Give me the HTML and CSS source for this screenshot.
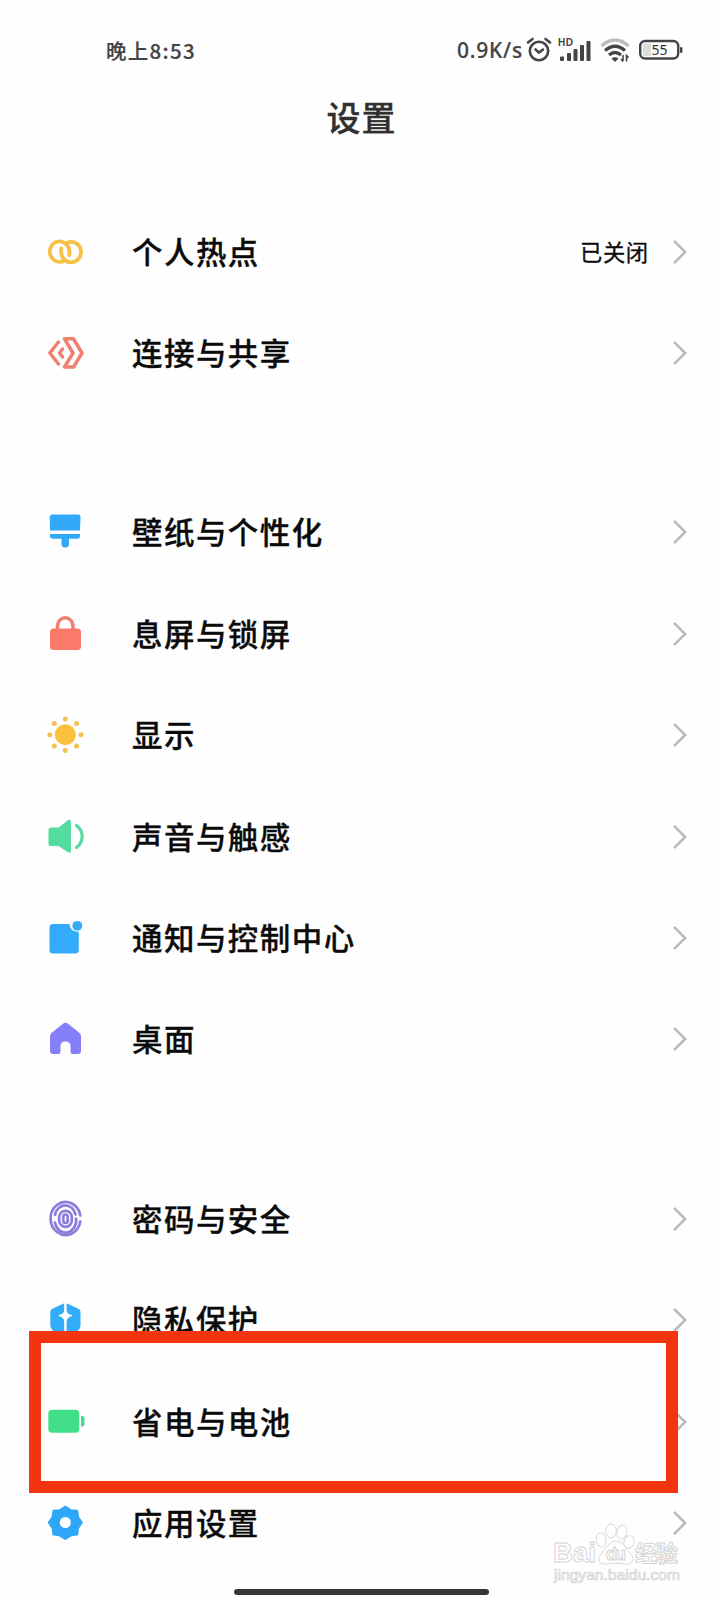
FILE: index.html
```html
<!DOCTYPE html>
<html lang="zh-CN">
<head>
<meta charset="utf-8">
<title>设置</title>
<link rel="stylesheet" href="styles.css">
</head>
<body>
<svg class="defs" width="0" height="0"><symbol id="chevron" viewBox="0 0 16 26"><path d="M2 1.800L13.200 13L2 24.200" fill="none" stroke="#b9b9b9" stroke-width="2.500"/></symbol></svg>
<div class="screen">
  <header class="status">
    <span class="time">晚上8:53</span>
    <div class="indicators">
      <span class="speed">0.9K/s</span>
      <svg class="alarm" width="26" height="26" viewBox="0 0 26 26" fill="none" stroke="#444" stroke-width="2.600" stroke-linecap="round"><circle cx="13" cy="14" r="9.200"/><path d="M9.500 12.500L13 15.500L17 12.500M2 5.500L6.500 2M24 5.500L19.500 2"/></svg>
      <svg class="signal" width="33" height="26" viewBox="0 0 33 26"><text class="hd" x="0" y="8.500" textLength="15">HD</text><g fill="#444"><rect x="2" y="19.500" width="4" height="4.500" rx="1"/><rect x="9" y="16" width="4" height="8" rx="1"/><rect x="15.500" y="12" width="4" height="12" rx="1"/><rect x="22" y="8" width="4" height="16" rx="1"/><rect x="28.500" y="4" width="4" height="20" rx="1"/></g></svg>
      <svg class="wifi" width="30" height="26" viewBox="0 0 30 26" fill="none" stroke-width="3.200"><path d="M1.500 9Q15-3 28.500 9" stroke="#bbb"/><path d="M5 13.500Q15 5 25 13.500M9 18Q15 13 21 18" stroke="#444"/><path d="M15 25L11.500 21.500Q15 18.800 18.500 21.500Z" fill="#444"/><path d="M23 18V24M21 22L23 24.500M26.500 24.500V18.500L28.500 20.500" stroke="#444" stroke-width="1.600"/></svg>
      <svg class="battery" width="44" height="22" viewBox="0 0 44 22"><rect x="1.200" y="2" width="38" height="17.500" rx="5" fill="none" stroke="#444" stroke-width="2.400"/><path d="M4 4.500H12V17H4Z" fill="#ddd"/><rect x="41" y="8" width="2.400" height="6" rx="1" fill="#444"/><text class="level" x="20.500" y="15.800" text-anchor="middle">55</text></svg>
    </div>
  </header>
  <h1 class="title">设置</h1>

  <main class="list">
    <section class="group">
      <div class="row"><svg class="icon" viewBox="0 0 40 40" fill="none" stroke="#f5c248" stroke-width="3.800" stroke-linecap="round"><path d="M24.400 23V19.500A9.800 10.200 0 1 0 19.500 28.500"/><path d="M16.200 16.500V20A9.900 10.200 0 1 0 22 10.800"/></svg><span class="label">个人热点</span><span class="value">已关闭</span><svg class="chevron"><use href="#chevron"/></svg></div>
      <div class="row"><svg class="icon" viewBox="0 0 40 40" fill="none" stroke="#f07f70" stroke-width="3.500" stroke-linecap="round" stroke-linejoin="round"><path d="M19.500 5.800H28.500L37 20L28.500 34H19.500L28 20ZM13.500 9L4.800 20L13.500 31M17.500 16L14.500 20L17.500 24"/></svg><span class="label">连接与共享</span><svg class="chevron"><use href="#chevron"/></svg></div>
    </section>
    <section class="group">
      <div class="row"><svg class="icon" viewBox="0 0 40 40" fill="#32a8fa"><path d="M7.500 2.500H33Q35.500 2.500 35.500 5L35 18.500H5L4.700 5Q4.700 2.500 7.500 2.500ZM5 22H35V24Q35 26.700 32.500 26.700H24V32Q24 35.500 20.300 35.500Q16.500 35.500 16.500 32V26.700H8Q5 26.700 5 24Z"/></svg><span class="label">壁纸与个性化</span><svg class="chevron"><use href="#chevron"/></svg></div>
      <div class="row"><svg class="icon" viewBox="0 0 40 40"><rect x="5" y="14.500" width="31" height="21.500" rx="3.500" fill="#fb7968"/><path d="M12.500 15.500V12A7.700 8.300 0 0 1 28 12V15.500" fill="none" stroke="#f47e6e" stroke-width="3.500"/></svg><span class="label">息屏与锁屏</span><svg class="chevron"><use href="#chevron"/></svg></div>
      <div class="row"><svg class="icon" viewBox="0 0 40 40" fill="#fcc13c"><circle cx="20.300" cy="19.700" r="10.500"/><g fill="#f3c252"><circle cx="20.300" cy="4" r="2.500"/><circle cx="20.300" cy="35.500" r="2.500"/><circle cx="4.800" cy="19.700" r="2.500"/><circle cx="36" cy="19.700" r="2.500"/><circle cx="9.300" cy="8.500" r="2.500"/><circle cx="31.500" cy="8.500" r="2.500"/><circle cx="9.300" cy="30.900" r="2.500"/><circle cx="31.500" cy="30.900" r="2.500"/></g></svg><span class="label">显示</span><svg class="chevron"><use href="#chevron"/></svg></div>
      <div class="row"><svg class="icon" viewBox="0 0 40 40" fill="#54dca0"><path d="M6 10.500H13.500L22.500 3.500Q26 1.500 26 5V33.500Q26 37 22.500 35L13.500 29H6Q3.500 29 3.500 26.500V13Q3.500 10.500 6 10.500Z"/><path d="M31.500 8.500C39 14 39 25 31.500 30.500" fill="none" stroke="#54dca0" stroke-width="3.200" stroke-linecap="round"/></svg><span class="label">声音与触感</span><svg class="chevron"><use href="#chevron"/></svg></div>
      <div class="row"><svg class="icon" viewBox="0 0 40 40" fill="#33aafa"><path d="M8 6H24.500Q24.800 13.500 33.800 14V32Q33.800 35.500 30.500 35.500H8Q4.500 35.500 4.500 32V9.500Q4.500 6 8 6Z"/><circle cx="32.300" cy="7.800" r="4.900"/></svg><span class="label">通知与控制中心</span><svg class="chevron"><use href="#chevron"/></svg></div>
      <div class="row"><svg class="icon" viewBox="0 0 40 40" fill="#8580f9"><path d="M18.300 4.500Q20.500 3 22.700 4.500L34 13.500Q36 15 36 17.500V32Q36 35 33 35H27.500Q25.500 35 25.500 33V27Q25.500 22.500 20.500 22.500Q15.500 22.500 15.500 27V33Q15.500 35 13.500 35H8Q5 35 5 32V17.500Q5 15 7 13.500Z"/></svg><span class="label">桌面</span><svg class="chevron"><use href="#chevron"/></svg></div>
    </section>
    <section class="group">
      <div class="row"><svg class="icon" viewBox="0 0 40 40" fill="none" stroke="#8b7edb" stroke-width="2.700" stroke-linecap="round"><path d="M35.300 16.500A15 16.500 0 1 0 35.300 22.500"/><path d="M10 16A10.500 12 0 0 1 30.500 15.500M31 19.500A10.500 12 0 0 1 10 23.500"/><rect x="14.200" y="11.800" width="12.600" height="16" rx="6.300"/><rect x="18.300" y="15.500" width="4.400" height="8.500" rx="2.200"/></svg><span class="label">密码与安全</span><svg class="chevron"><use href="#chevron"/></svg></div>
      <div class="row"><svg class="icon" viewBox="0 0 40 40"><path d="M7 9L18 3.700Q20.400 2.700 22.800 3.700L33.800 9Q35.500 10 35.500 12V25Q35.500 32 20.400 37Q5.300 32 5.300 25V12Q5.300 10 7 9Z" fill="#31adfa"/><path d="M20.400 2V34" stroke="#fff" stroke-width="2.400"/><path d="M20.400 9.500Q21.500 14.500 27 15.500Q21.500 17 20.400 22.500Q19.300 17 13.800 15.500Q19.300 14.500 20.400 9.500Z" fill="#fff" stroke="#fff"/></svg><span class="label">隐私保护</span><svg class="chevron"><use href="#chevron"/></svg></div>
      <div class="row marked"><svg class="icon" viewBox="0 0 40 40" fill="#42df88"><rect x="3.300" y="7.800" width="31" height="23" rx="3.800"/><path d="M36 14Q39.500 13.500 39.500 16.500V22Q39.500 25 36 24.500Z"/></svg><span class="label">省电与电池</span><svg class="chevron"><use href="#chevron"/></svg><div class="highlight"></div></div>
      <div class="row"><svg class="icon" viewBox="0 0 40 40"><path d="M20.300 3.500L26 7.300L32.200 7.800L33 14L36.800 19.500L33 25.200L32.200 31.500L26 32.300L20.300 36L14.600 32.300L8.400 31.500L7.600 25.200L3.800 19.500L7.600 14L8.400 7.800L14.600 7.300Z" fill="#2fa7f8" stroke="#2fa7f8" stroke-width="2" stroke-linejoin="round"/><circle cx="20.300" cy="19.500" r="5.500" fill="#fff"/></svg><span class="label">应用设置</span><svg class="chevron"><use href="#chevron"/></svg></div>
    </section>
  </main>
  <div class="homebar"></div>
  <svg class="watermark" width="136" height="66" viewBox="0 0 136 66">
    <g fill="#fff" stroke="#d8d8d8" stroke-width="1"><ellipse cx="49" cy="18" rx="5" ry="7" transform="rotate(-12 49 18)"/><ellipse cx="59" cy="9" rx="5.300" ry="7"/><ellipse cx="70" cy="10" rx="5" ry="7" transform="rotate(12 70 10)"/><ellipse cx="77" cy="20" rx="5" ry="6.500" transform="rotate(20 77 20)"/><path d="M64 19C57 19 54 27 49 32C44 38 48 43 54 42C61 41 67 41 73 42C80 43 84 37 78 31C73 26 71 19 64 19Z"/></g>
    <g class="mark"><text x="1" y="40" font-size="28" textLength="43" lengthAdjust="spacingAndGlyphs">Bai</text><text x="54" y="38" font-size="18" textLength="20">du</text><text x="83" y="39" font-size="22" textLength="43">经验</text><text x="2" y="58" font-size="14" class="url" textLength="126" lengthAdjust="spacingAndGlyphs">jingyan.baidu.com</text></g>
  </svg>
</div>
</body>
</html>
```
FILE: styles.css
```css
* { box-sizing: border-box; }
body { margin: 0; background: #fefefe; font-family: "Noto Sans CJK SC", sans-serif; color: #0b0b0b; }
.defs { position: absolute; }
.screen { position: relative; width: 720px; height: 1600px; overflow: hidden; display: flex; flex-direction: column; }
.status { height: 80px; padding: 20px 37px 0 106px; display: flex; align-items: center; justify-content: space-between; color: #444; }
.time { font-size: 20.5px; font-weight: 500; letter-spacing: 1.3px; line-height: 30px; -webkit-text-stroke: 0.2px #444; }
.indicators { display: flex; align-items: center; }
.speed { font-size: 21px; line-height: 30px; font-family: "Noto Sans", sans-serif; letter-spacing: 0.8px; font-weight: 500; -webkit-text-stroke: 0.2px #444; }
.alarm { margin: 0 6px 0 3px; }
.signal { margin-right: 9px; }
.wifi { margin-right: 9px; }
.hd { font: bold 10px "Liberation Sans", sans-serif; fill: #444; }
.level { font: 14px "Noto Sans", sans-serif; fill: #333; }
.title { margin: 0; height: 121px; padding-top: 12px; font-size: 34px; line-height: 50px; font-weight: 500; text-align: center; color: #303030; letter-spacing: 1px; padding-left: 3px; -webkit-text-stroke: 0.3px #303030; }
.list { display: flex; flex-direction: column; gap: 78px; }
.row { height: 101.4px; padding: 0 32px 0 45px; display: flex; align-items: center; }
.icon { width: 40px; height: 40px; flex: none; }
.label { margin-left: 47px; padding-bottom: 2px; font-size: 30.5px; line-height: 44px; font-weight: 500; letter-spacing: 1.45px; white-space: nowrap; -webkit-text-stroke: 0.3px #0b0b0b; }
.value { margin-left: auto; padding-bottom: 2px; font-size: 22.3px; line-height: 32px; letter-spacing: 0.5px; margin-right: 23.5px; -webkit-text-stroke: 0.3px #0b0b0b; }
.chevron { width: 16px; height: 26px; margin-left: auto; flex: none; }
.value + .chevron { margin-left: 0; }
.marked { position: relative; }
.highlight { position: absolute; left: 29px; top: -40px; width: 649px; height: 162px; border: 12px solid #f33410; }
.homebar { position: absolute; left: 234px; top: 1589px; width: 255px; height: 6px; border-radius: 3px; background: #363638; }
.watermark { position: absolute; left: 552px; top: 1522px; }
.mark { font-family: "Liberation Sans", "Noto Sans CJK SC", sans-serif; font-weight: bold; fill: #fff; stroke: #d2d2d2; stroke-width: 0.9px; }
.url { font-weight: normal; stroke-width: 0.7px; }
```
